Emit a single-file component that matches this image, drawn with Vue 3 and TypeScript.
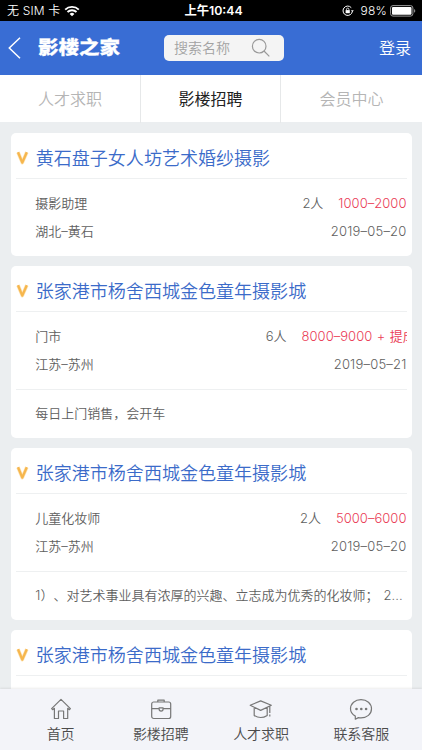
<script setup lang="ts">
interface Job {
  company: string
  position: string
  count: string
  salary: string
  place: string
  date: string
  note?: string
}

const jobs: Job[] = [
  { company: '黄石盘子女人坊艺术婚纱摄影', position: '摄影助理', count: '2人', salary: '1000–2000', place: '湖北–黄石', date: '2019–05–20' },
  { company: '张家港市杨舍西城金色童年摄影城', position: '门市', count: '6人', salary: '8000–9000 + 提成', place: '江苏–苏州', date: '2019–05–21', note: '每日上门销售，会开车' },
  { company: '张家港市杨舍西城金色童年摄影城', position: '儿童化妆师', count: '2人', salary: '5000–6000', place: '江苏–苏州', date: '2019–05–20', note: '1）、对艺术事业具有浓厚的兴趣、立志成为优秀的化妆师； 2...' },
  { company: '张家港市杨舍西城金色童年摄影城', position: '', count: '', salary: '', place: '', date: '' },
]

const tabs: string[] = ['人才求职', '影楼招聘', '会员中心']
const activeTab = 1
</script>

<template>
  <div class="screen" lang="zh-CN">
    <div class="status">
      <div class="side">
        <span class="carrier">无 SIM 卡</span>
        <svg class="wifi" width="16" height="12" viewBox="0 0 16 12">
          <path d="M1.2 4.6a9.8 9.8 0 0 1 13.6 0M3.5 7a6.5 6.5 0 0 1 9 0" fill="none" stroke="#fff" stroke-width="1.9" />
          <path d="M8 11.3 5.6 8.9a3.5 3.5 0 0 1 4.8 0z" fill="#fff" />
        </svg>
      </div>
      <span class="clock">上午10:44</span>
      <div class="side right">
        <svg class="lock" width="12" height="12" viewBox="0 0 12 12" fill="none" stroke="#fff">
          <path d="M10.4 6.2A4.7 4.7 0 1 1 9.3 2.7" stroke-width="1" />
          <path d="M8.9 5.2h2.9l-1.4 1.9z" fill="#fff" stroke="none" />
          <rect x="3.6" y="5.1" width="4.2" height="3.1" fill="#fff" stroke="none" />
          <path d="M4.5 5.2V4.3a1.2 1.2 0 0 1 2.4 0v.9" stroke-width=".8" />
        </svg>
        <span class="percent">98%</span>
        <svg width="26" height="12" viewBox="0 0 26 12">
          <rect x=".6" y=".6" width="22.3" height="10.5" rx="2.4" fill="none" stroke="#999" />
          <rect x="2" y="2" width="19.5" height="7.7" rx="1" fill="#fff" />
          <path d="M24 4.1q1.3.5 1.3 1.8T24 7.7z" fill="#888" />
        </svg>
      </div>
    </div>

    <header class="header">
      <svg class="back" width="13" height="22" viewBox="0 0 13 22"><path d="M12 .8 1.3 11 12 21.2" fill="none" stroke="#fff" stroke-width="1.5" /></svg>
      <span class="logo">影楼之家</span>
      <div class="search">
        <span>搜索名称</span>
        <svg width="20" height="20" viewBox="0 0 20 20" fill="none" stroke="#999" stroke-width="1.2"><circle cx="8.2" cy="8.2" r="6.8" /><path d="m13 13 5.3 5.3" /></svg>
      </div>
      <span class="login">登录</span>
    </header>

    <nav class="tabs">
      <span v-for="(tab, i) in tabs" :key="tab" class="tab" :class="{ active: i === activeTab }">{{ tab }}</span>
    </nav>

    <main class="list">
      <article v-for="(job, i) in jobs" :key="i" class="card">
        <h2 class="title">
          <svg width="13" height="14" viewBox="0 0 13 14" fill="none" stroke-linejoin="round">
            <path d="M2 1.2 6.3 11.6 10.8 1.2" stroke="#fde3b5" stroke-width="3.6" />
            <path d="M2 1.2 6.3 11.6 10.8 1.2" stroke="#f6b64d" stroke-width="2.3" />
          </svg>
          <span>{{ job.company }}</span>
        </h2>
        <div class="body">
          <div class="row">
            <span>{{ job.position }}</span>
            <span class="count">{{ job.count }}</span>
            <span class="salary">{{ job.salary }}</span>
          </div>
          <div class="row">
            <span>{{ job.place }}</span>
            <span class="date">{{ job.date }}</span>
          </div>
        </div>
        <p v-if="job.note" class="note">{{ job.note }}</p>
      </article>
    </main>

    <footer class="dock">
      <div class="item">
        <svg width="24" height="24" viewBox="0 0 24 24"><path d="M2.6 12.7 12 3.3l9.4 9.4-.9 1-1.8-1.4v10.2h-4.1V15H9.5v7.5H5.4V12.3l-1.8 1.4z" /></svg>
        <span>首页</span>
      </div>
      <div class="item">
        <svg width="24" height="24" viewBox="0 0 24 24"><rect x="2.7" y="6" width="19" height="16.5" rx="2" /><path d="M8.8 6V4.2h6.4V6M2.7 12.7h7.4M14.1 12.7h7.6M10.1 11.8h4v1.3a2 2 0 0 1-4 0z" /></svg>
        <span>影楼招聘</span>
      </div>
      <div class="item">
        <svg width="24" height="24" viewBox="0 0 24 24"><path d="m1.2 9.2 10.5-4.3 10.6 4.3-10.6 5.2zM5.2 11.2v8.2q6.5 4.2 13 0v-8.2M20.8 10v7M20.8 18.4v2" /></svg>
        <span>人才求职</span>
      </div>
      <div class="item">
        <svg width="24" height="24" viewBox="0 0 24 24"><path d="M6.3 23.2v-3.1C3.2 18.4 1.5 16 1.5 12.8c0-5.4 4.6-9.2 10.5-9.2s10.5 3.8 10.5 9.2S17.9 21.9 12 21.9q-1.3 0-2.6-.3z" /><g class="dots"><circle cx="7.5" cy="13" r="1.3" /><circle cx="12.3" cy="13" r="1.3" /><circle cx="17.1" cy="13" r="1.3" /></g></svg>
        <span>联系客服</span>
      </div>
    </footer>
  </div>
</template>

<style>
body { margin: 0; background: #ebeef0; }
</style>

<style scoped>
.screen {
  width: 422px;
  height: 750px;
  display: flex;
  flex-direction: column;
  overflow: hidden;
  background: #ebeef0;
  font-family: Inter, "Noto Sans CJK SC", sans-serif;
  font-weight: 350;
  text-spacing-trim: space-all;
}
.status {
  flex: none;
  box-sizing: border-box;
  height: 21px;
  padding: 1px 6px 0 7px;
  display: flex;
  align-items: center;
  background: #000;
  color: #fff;
  font-size: 12px;
  line-height: 20px;
}
.side { flex: 1; display: flex; align-items: center; white-space: nowrap; }
.carrier { letter-spacing: .15px; }
.wifi { margin-left: 4px; }
.right { justify-content: flex-end; }
.clock { margin-left: 4px; font-weight: 600; font-size: 12.3px; }
.percent { margin: 0 3px 0 7px; letter-spacing: .2px; }
.header {
  flex: none;
  box-sizing: border-box;
  height: 54px;
  padding: 0 11px 0 8px;
  display: flex;
  align-items: center;
  background: #396dd4;
  color: #fff;
}
.logo {
  margin-left: 17px;
  font-size: 20.5px;
  font-weight: 900;
  line-height: 24px;
  transform: scaleY(.88);
  -webkit-text-stroke: .3px #fff;
}
.search {
  box-sizing: border-box;
  width: 120px;
  height: 26px;
  margin-left: 44px;
  padding: 0 13px 0 10px;
  display: flex;
  align-items: center;
  justify-content: space-between;
  border-radius: 5px;
  background: #f4f4f4;
  color: #a2a2a2;
  font-size: 14px;
  line-height: 24px;
}
.search span { padding-bottom: 1px; }
.login { margin-left: auto; padding-bottom: 2px; font-size: 16px; }
.tabs {
  flex: none;
  box-sizing: border-box;
  height: 47px;
  display: grid;
  grid-template-columns: 140px 140px 142px;
  background: #fff;
  color: #b5b5b5;
  font-size: 16px;
  line-height: 48px;
  text-align: center;
}
.tab + .tab { border-left: 1px solid #e6e8e9; }
.tab.active { color: #222; font-weight: 400; }
.list {
  flex: 1;
  min-height: 0;
  overflow: hidden;
  padding: 11px 10.5px 0;
  display: flex;
  flex-direction: column;
  gap: 10.4px;
}
.card {
  flex: none;
  padding: 0 5px;
  border-radius: 5px;
  background: #fff;
  color: #606060;
  font-size: 13px;
}
.title {
  box-sizing: border-box;
  height: 46px;
  margin: 0;
  padding: 3px 0 0;
  display: flex;
  align-items: center;
  border-bottom: 1px solid #eef0f1;
  color: #3b6bc9;
  font-size: 18.05px;
  font-weight: 350;
}
.title svg { margin: 1px 6.6px 0 .6px; }
.body {
  box-sizing: border-box;
  height: 77px;
  padding: 10px 0 0 19.8px;
}
.row {
  height: 28px;
  display: flex;
  align-items: center;
  line-height: 28px;
  white-space: nowrap;
}
.count { margin-left: auto; }
.salary {
  max-width: 105px;
  margin-left: 15px;
  overflow: hidden;
  color: #ea3b56;
  letter-spacing: .04px;
  word-spacing: .7px;
}
.date {
  margin-left: auto;
  letter-spacing: .2px;
}
.note {
  box-sizing: border-box;
  height: 48.5px;
  margin: 0;
  padding-left: 19.8px;
  border-top: 1px solid #eef0f1;
  line-height: 47px;
  white-space: nowrap;
  word-spacing: 1.5px;
}
.dock {
  flex: none;
  box-sizing: border-box;
  position: relative;
  height: 61px;
  padding: 7px 10.5px 0;
  display: grid;
  grid-template-columns: repeat(4, 1fr);
  background: #f3f4f9;
  box-shadow: 0 -1px 2px rgba(0, 0, 0, .08);
  color: #4b4b4b;
  font-size: 14px;
  line-height: 20px;
}
.item { display: flex; flex-direction: column; align-items: center; gap: 4px; }
.item svg { fill: none; stroke: #777; stroke-width: 1.2; stroke-linejoin: round; }
.dots { fill: #777; stroke: none; }
</style>
